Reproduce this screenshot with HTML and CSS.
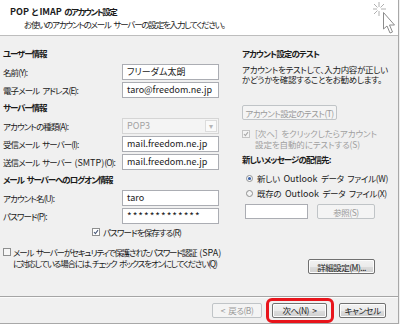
FILE: index.html
```html
<!DOCTYPE html>
<html lang="ja">
<head>
    <meta charset="UTF-8">
    <title>POP と IMAP のアカウント設定</title>
    <link rel="stylesheet" href="styles.css">
</head>
<body>
    <div class="dialog">
        <header class="head">
            <div class="head-text">
                <div class="head-title"><span class="en">POP</span> と <span class="en">IMAP</span> のアカウント設定</div>
                <div class="head-sub">お使いのアカウントのメール サーバーの設定を入力してください。</div>
            </div>
            <svg class="head-icon" width="26" height="35" viewBox="0 0 26 35">
                <g stroke="#b0b0b0" stroke-width="1">
                    <line x1="6" y1="2" x2="6" y2="7"/>
                    <line x1="6" y1="11" x2="6" y2="16"/>
                    <line x1="-1" y1="9" x2="4" y2="9"/>
                    <line x1="8" y1="9" x2="13" y2="9"/>
                    <line x1="1" y1="4" x2="4.5" y2="7.5"/>
                    <line x1="11" y1="4" x2="7.5" y2="7.5"/>
                    <line x1="1" y1="14" x2="4.5" y2="10.5"/>
                </g>
                <path d="M10.5 12.5 L10.5 29 L14 26 L17 33 L19.5 32 L16.5 25 L21.5 25 Z" fill="#fff" stroke="#8c8c8c" stroke-width="1"/>
            </svg>
        </header>

        <main class="body">
            <div class="cols">
                <section class="col-left">
                    <h3 class="group first">ユーザー情報</h3>
                    <div class="row"><label>名前(Y):</label><div class="box">フリーダム太朗</div></div>
                    <div class="row"><label>電子メール アドレス(E):</label><div class="box">taro@freedom.ne.jp</div></div>

                    <h3 class="group">サーバー情報</h3>
                    <div class="row"><label>アカウントの種類(A):</label>
                        <div class="box select"><span>POP3</span><span class="arrow">▾</span></div>
                    </div>
                    <div class="row"><label>受信メール サーバー(I):</label><div class="box">mail.freedom.ne.jp</div></div>
                    <div class="row"><label>送信メール サーバー <span class="en">(SMTP)</span>(O):</label><div class="box">mail.freedom.ne.jp</div></div>

                    <h3 class="group">メール サーバーへのログオン情報</h3>
                    <div class="row"><label>アカウント名(U):</label><div class="box">taro</div></div>
                    <div class="row"><label>パスワード(P):</label><div class="box secret">*************</div></div>

                    <div class="check save">
                        <svg class="cb" width="8" height="8" viewBox="0 0 8 8"><rect x="0.5" y="0.5" width="7" height="7" fill="#fff" stroke="#8e8f8f"/><path d="M2 4 L3.4 5.6 L6 2.2" fill="none" stroke="#4a5a7a" stroke-width="1.1"/></svg>
                        <span>パスワードを保存する(R)</span>
                    </div>
                </section>

                <section class="col-right">
                    <h3 class="group first">アカウント設定のテスト</h3>
                    <p class="desc">アカウントをテストして、入力内容が正しい<br>かどうかを確認することをお勧めします。</p>
                    <div class="btn disabled test">アカウント設定のテスト(T)</div>
                    <div class="check auto">
                        <svg class="cb" width="8" height="8" viewBox="0 0 8 8"><rect x="0.5" y="0.5" width="7" height="7" fill="#f4f4f4" stroke="#c4c4c4"/><path d="M2 4 L3.4 5.6 L6 2.2" fill="none" stroke="#a8a8a8" stroke-width="1.1"/></svg>
                        <span>[次へ] をクリックしたらアカウント<br>設定を自動的にテストする(S)</span>
                    </div>
                    <h3 class="group deliver">新しいメッセージの配信先:</h3>
                    <div class="radio first-radio">
                        <svg width="7" height="7" viewBox="0 0 7 7"><circle cx="3.5" cy="3.5" r="3" fill="#fff" stroke="#8e8f8f"/><circle cx="3.5" cy="3.5" r="1.6" fill="#3c63a8"/></svg>
                        <span>新しい <span class="en">Outlook</span> データ ファイル(W)</span>
                    </div>
                    <div class="radio">
                        <svg width="7" height="7" viewBox="0 0 7 7"><circle cx="3.5" cy="3.5" r="3" fill="#f4f4f4" stroke="#8e8f8f"/></svg>
                        <span>既存の <span class="en">Outlook</span> データ ファイル(X)</span>
                    </div>
                    <div class="browse">
                        <div class="box empty"></div>
                        <div class="btn disabled ref">参照(S)</div>
                    </div>
                </section>
            </div>

            <div class="spa-row">
                <div class="check spa">
                    <svg class="cb" width="8" height="8" viewBox="0 0 8 8"><rect x="0.5" y="0.5" width="7" height="7" fill="#f6f6f6" stroke="#8e8f8f"/></svg>
                    <span>メール サーバーがセキュリティで保護されたパスワード認証 <span class="en">(SPA)</span><br>に対応している場合には、チェック ボックスをオンにしてください(Q)</span>
                </div>
                <div class="btn detail">詳細設定(M)...</div>
            </div>
        </main>

        <footer class="foot">
            <div class="btn disabled back">&lt; 戻る(B)</div>
            <div class="btn next">次へ(N) &gt;<span class="highlight"></span></div>
            <div class="btn cancel">キャンセル</div>
        </footer>
    </div>
</body>
</html>
```

FILE: styles.css
```css
* {
    box-sizing: border-box;
}
body {
    margin: 0;
    width: 400px;
    height: 324px;
    overflow: hidden;
    background: #f0f0f0;
    color: #1a1a1a;
    font-family: "Noto Sans CJK JP", sans-serif;
    font-size: 8.5px;
    letter-spacing: -0.9px;
    word-spacing: 2px;
    font-feature-settings: "palt" 1;
}
.en {
    font-size: 9px;
    letter-spacing: 0;
}
.dialog {
    width: 399px;
    height: 324px;
    border-right: 1px solid #a8a8a8;
    display: flex;
    flex-direction: column;
}
.head {
    height: 36px;
    flex: none;
    background: #fff;
    border-bottom: 1px solid #bdbdbd;
    display: flex;
    justify-content: space-between;
}
.head-text {
    padding: 5px 0 0 10px;
}
.head-title {
    font-weight: bold;
    line-height: 12px;
    letter-spacing: -1.5px;
}
.head-sub {
    margin-left: 14px;
    line-height: 12px;
    letter-spacing: -1.2px;
}
.head-icon {
    flex: none;
    margin: 0 -1px 0 0;
}
.body {
    height: 260px;
    flex: none;
    padding-left: 3px;
}
.cols {
    display: flex;
}
.col-left {
    width: 216px;
}
.col-right {
    margin-left: 23px;
    width: 155px;
}
.group {
    margin: 2px 0 4px;
    font-size: 8.5px;
    font-weight: bold;
    line-height: 14px;
    letter-spacing: -1.1px;
}
.group.first {
    margin-top: 10px;
}
.col-right .group {
    letter-spacing: -0.9px;
}
.row {
    display: flex;
    align-items: center;
    height: 16px;
    margin-bottom: 2px;
}
.row label {
    width: 119px;
    white-space: nowrap;
}
.box {
    width: 97px;
    height: 16px;
    border: 1px solid #abadb3;
    background: #fff;
    padding: 0 4px;
    line-height: 14px;
    font-size: 9px;
    letter-spacing: 0;
}
.box.secret {
    letter-spacing: 1px;
    font-size: 10px;
}
.select {
    display: flex;
    justify-content: space-between;
    background: #f4f4f4;
    border-color: #d5d5d5;
    color: #a3a3a3;
    padding-right: 0;
}
.select .arrow {
    width: 12px;
    margin: 1px;
    border: 1px solid #dcdcdc;
    background: #fafafa;
    text-align: center;
    line-height: 10px;
    font-size: 8px;
    color: #b6b6b6;
}
.check {
    display: flex;
    align-items: flex-start;
    white-space: nowrap;
}
.check .cb {
    flex: none;
}
.save {
    margin-left: 89px;
    align-items: center;
    height: 12px;
}
.save span {
    margin-left: 3px;
}
.desc {
    margin: 0;
    line-height: 10px;
    white-space: nowrap;
    letter-spacing: -0.3px;
}
.btn {
    display: flex;
    align-items: center;
    justify-content: center;
    height: 15px;
    border: 1px solid #707070;
    border-radius: 2px;
    background: linear-gradient(#f2f2f2, #ebebeb 50%, #dddddd 51%, #cfcfcf);
    box-shadow: inset 0 0 0 1px #fcfcfc;
    white-space: nowrap;
    letter-spacing: -0.5px;
}
.btn.disabled {
    border-color: #c0c4c7;
    background: #f4f4f4;
    box-shadow: none;
    color: #9a9a9a;
}
.test {
    width: 95px;
    margin-top: 21px;
}
.auto {
    margin-top: 8px;
    line-height: 11px;
    color: #a0a0a0;
    letter-spacing: -0.1px;
}
.auto .cb {
    margin-top: 2px;
}
.auto span {
    margin-left: 5px;
}
.group.deliver {
    margin-top: 2px;
}
.radio {
    display: flex;
    align-items: center;
    height: 14px;
    margin-top: 1px;
    padding-left: 4px;
    white-space: nowrap;
    letter-spacing: -0.3px;
}
.radio.first-radio {
    margin-top: 5px;
}
.radio > span {
    margin-left: 4px;
}
.browse {
    display: flex;
    margin-top: 4px;
    padding-left: 3px;
}
.browse .empty {
    width: 63px;
    height: 15px;
}
.ref {
    width: 58px;
    margin-left: 9px;
}
.spa-row {
    display: flex;
    justify-content: space-between;
    align-items: flex-start;
    margin-top: 9px;
    padding-right: 23px;
}
.spa {
    line-height: 10px;
    letter-spacing: -1.2px;
}
.spa .cb {
    margin-top: 1px;
}
.spa > span {
    margin-left: 2px;
}
.detail {
    width: 67px;
    margin-top: 12px;
}
.foot {
    height: 28px;
    flex: none;
    border-top: 1px solid #a5a5a5;
    border-bottom: 1px solid #a8a8a8;
    box-shadow: inset 0 1px 0 #fbfbfb;
    display: flex;
    align-items: center;
    justify-content: flex-end;
    padding-right: 12px;
}
.back {
    width: 50px;
}
.next {
    position: relative;
    width: 55px;
    margin-left: 10px;
}
.cancel {
    width: 47px;
    margin-left: 12px;
}
.highlight {
    position: absolute;
    left: -7px;
    right: -8px;
    top: -6px;
    bottom: -6px;
    border: 3px solid #e8141b;
    border-radius: 6px;
}
```
